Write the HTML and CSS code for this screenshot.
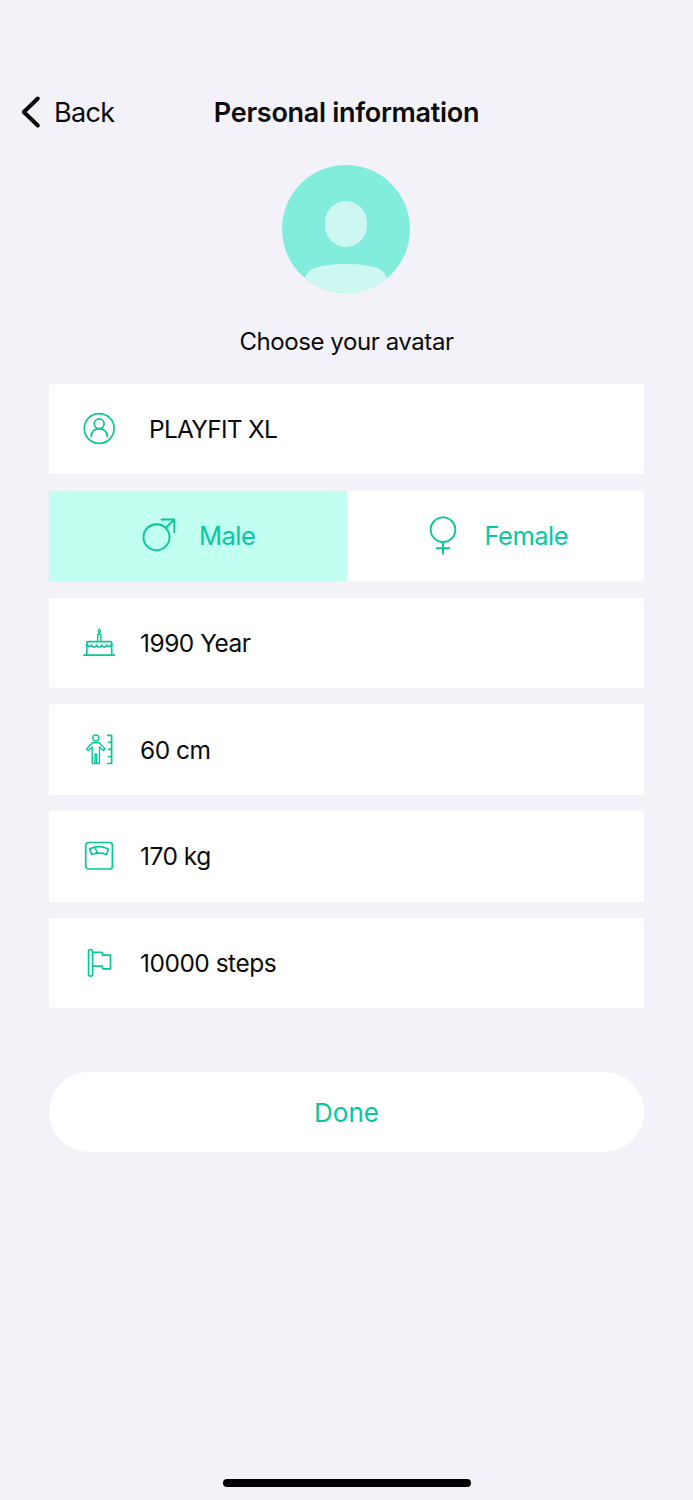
FILE: index.html
```html
<!DOCTYPE html>
<html lang="en">
<head>
    <meta charset="UTF-8">
    <meta name="viewport" content="width=device-width, initial-scale=1.0">
    <title>Personal information</title>
    <link rel="stylesheet" href="styles.css">
</head>

<body>
    <div class="header">
        <a class="back" href="#">
            <svg width="20" height="32" viewBox="0 0 20 32">
                <path d="M17.8 2.5L3.800 16l14 13.5"/>
            </svg>
            <span>Back</span>
        </a>
        <h1>Personal information</h1>
    </div>

    <div class="avatar">
        <svg width="128" height="128" viewBox="0 0 128 128">
            <rect x="43" y="36" width="42" height="46" rx="21" ry="21.5"/>
            <path d="M23 113C26 106 30 103.500 34 102.500Q48 98.700 64 98.700T94 102.500C98 103.500 102 106 105 113V128H23Z"/>
        </svg>
    </div>
    <p class="avatar-label">Choose your avatar</p>

    <div class="form">
        <div class="row name">
            <svg class="icon" viewBox="0 0 32 32">
                <circle cx="16.200" cy="15.500" r="14.900"/>
                <circle cx="16.200" cy="10.700" r="4.900"/>
                <path d="M8.200 23.500V22.900C8.200 18.500 11.700 15.700 16.200 15.700S24.200 18.500 24.200 22.900V23.500"/>
            </svg>
            <span>PLAYFIT XL</span>
        </div>
        <div class="row gender">
            <div class="option male active">
                <svg width="36" height="36" viewBox="0 0 36 36">
                    <circle cx="15.500" cy="19.200" r="13"/>
                    <path d="M24.700 10L33 1.700M20.500 1.500H33.300V14.300"/>
                </svg>
                <span>Male</span>
            </div>
            <div class="option female">
                <svg width="28" height="40" viewBox="0 0 28 40">
                    <circle cx="14" cy="13.700" r="12.300"/>
                    <path d="M14 26V37.700M7.700 32.300H20.300"/>
                </svg>
                <span>Female</span>
            </div>
        </div>
        <div class="row">
            <svg class="icon" viewBox="0 0 32 32">
                <path d="M1 28.200H31.300M3.800 28.200V15.700Q3.800 14.700 4.800 14.700H27.700Q28.700 14.700 28.700 15.700V28.200"/>
                <path d="M3.800 17.500Q5.800 20.800 8.600 18.200Q11 22 13.600 18.200Q16.200 22.300 18.800 18.200Q21.500 22 23.900 18.200Q26.700 20.800 28.700 17.500"/>
                <path class="thin" d="M14.700 14.500V7.200H17.900V14.500M16.300 7V5.500M16.300 2.300C17.700 4 17.600 5.500 16.300 5.500S14.900 4 16.300 2.300Z"/>
            </svg>
            <span>1990 Year</span>
        </div>
        <div class="row">
            <svg class="icon" viewBox="0 0 32 32">
                <circle class="thin" cx="12.800" cy="4" r="3"/>
                <path class="thin" d="M9.500 8.800H16.200L22 14.800L20.500 16.500L16.500 13.100V29.500H13.600V20H12V29.500H9.200V13.100L5.200 16.500L3.800 14.800Z"/>
                <path d="M24.700 1.300H28.600V29.500H24.700M25.700 8.300H28.600M25.700 15.400H28.600M25.700 22.500H28.600"/>
            </svg>
            <span>60 cm</span>
        </div>
        <div class="row">
            <svg class="icon" viewBox="0 0 32 32">
                <rect x="2.700" y="2.500" width="26.700" height="26.500" rx="2.800"/>
                <path d="M6.500 9Q16 4.200 25.300 9L23.500 14.500Q16 11.700 8.700 14.500ZM12.200 8L14.300 12.500"/>
            </svg>
            <span>170 kg</span>
        </div>
        <div class="row">
            <svg class="icon" viewBox="0 0 32 32">
                <rect x="5.600" y="2.500" width="4" height="26.600" rx="1.600"/>
                <path d="M9.600 5.300H18.500Q19.500 5.300 19.500 6.300V8.200H27.500V21.800H20.500Q19.500 21.800 19.500 20.800V19.200H9.600"/>
            </svg>
            <span>10000 steps</span>
        </div>
    </div>

    <button class="done">Done</button>

    <div class="home-bar"></div>
</body>
</html>
```

FILE: styles.css
```css
/* General Reset */
* {
    margin: 0;
    padding: 0;
    box-sizing: border-box;
}

body {
    display: flex;
    flex-direction: column;
    height: 1500px;
    padding: 84px 49px 13px;
    font-family: Inter, "Liberation Sans", sans-serif;
    font-size: 25px;
    background-color: #f2f2f8;
    color: #0b0b0c;
}

svg {
    display: block;
    flex: none;
    fill: none;
    stroke: #08c797;
    stroke-width: 1.9;
    stroke-linecap: round;
    stroke-linejoin: round;
    overflow: visible;
}

/* Header */
.header {
    display: grid;
    grid-template-columns: 1fr auto 1fr;
    align-items: center;
    height: 56px;
    margin: 0 -29px;
}

.back {
    display: flex;
    align-items: center;
    gap: 14px;
    color: #0b0b0c;
    text-decoration: none;
    font-size: 27px;
    letter-spacing: -0.7px;
}

.back svg {
    stroke: #050505;
    stroke-width: 4;
}

h1 {
    font-size: 27px;
    font-weight: 600;
    letter-spacing: -0.3px;
}

/* Avatar */
.avatar {
    width: 128px;
    height: 128px;
    margin: 25px 0 0 233px;
    border-radius: 50%;
    background-color: #82eddc;
    overflow: hidden;
}

.avatar svg {
    fill: #cdf7f1;
    stroke: none;
}

.avatar-label {
    margin-top: 33px;
    line-height: 32px;
    font-size: 24px;
    letter-spacing: -0.42px;
    text-align: center;
}

/* Form rows */
.form {
    display: flex;
    flex-direction: column;
    gap: 16.4px;
    margin-top: 26px;
}

.row {
    display: flex;
    align-items: center;
    gap: 25px;
    height: 90.4px;
    padding-left: 34px;
    background-color: #fff;
    font-size: 24.5px;
    letter-spacing: -0.5px;
}

.icon {
    width: 32px;
    height: 32px;
    stroke-width: 1.7;
}

.thin {
    stroke-width: 1.4;
}

.name {
    gap: 34px;
    letter-spacing: -0.75px;
}

/* Gender switch */
.gender {
    gap: 0;
    padding-left: 0;
    color: #08c7a2;
    font-size: 25.5px;
}

.option {
    display: flex;
    align-items: center;
    width: 50%;
    height: 100%;
}

.male {
    gap: 22px;
    padding-left: 92px;
}

.female {
    gap: 28px;
    padding-left: 82px;
}

.active {
    background-color: #c1fff0;
}

/* Done button */
.done {
    height: 80px;
    margin-top: 64px;
    border: none;
    border-radius: 40px;
    background-color: #fff;
    color: #08c7a2;
    font-family: inherit;
    font-size: 26px;
}

.home-bar {
    width: 248px;
    height: 8px;
    margin: auto auto 0;
    border-radius: 4px;
    background-color: #000;
}
```
